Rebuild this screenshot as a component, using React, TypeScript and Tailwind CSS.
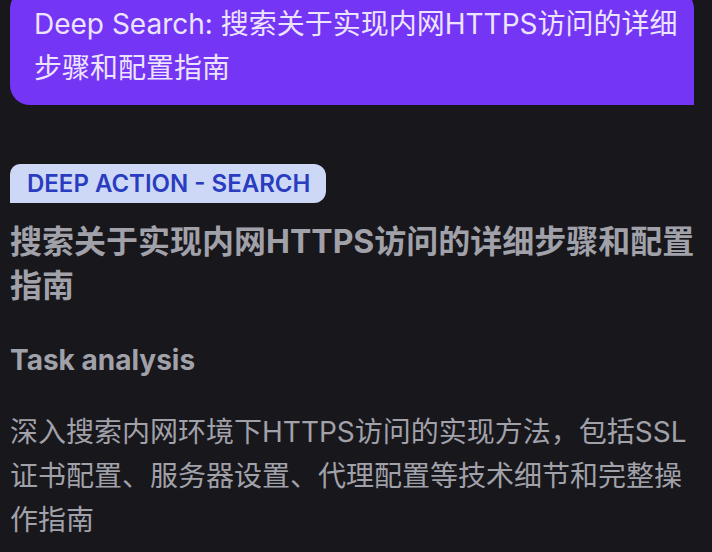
const App = () => {
  return (
    <div
      className="h-[552px] w-full overflow-hidden bg-[#18171c]"
      style={{ fontFamily: 'Inter, "Noto Sans CJK SC", "Noto Sans", sans-serif' }}
    >
      {/* user message bubble */}
      <div className="ml-[10px] mr-[18px] mt-[-11px] rounded-tl-[20px] rounded-tr-[20px] rounded-bl-[20px] bg-[#7435f5] pl-[24px] pr-[12px] pt-[13px] pb-[15px]">
        <p className="text-[28px] leading-[44px] text-[#ece4ff]">
          Deep Search: 搜索关于实现内网HTTPS访问的详细步骤和配置指南
        </p>
      </div>

      {/* response */}
      <div className="mt-[59px] pl-[10px] pr-[14px]">
        <span className="inline-flex h-[39px] items-center rounded-tl-[10px] rounded-r-[12px] bg-[#cdd8f6] pl-[17px] pr-[16px] text-[24px] font-semibold text-[#2a3cc0]">
          DEEP ACTION - SEARCH
        </span>

        <h2 className="mt-[17px] text-[32px] font-bold leading-[44px] text-[#a1a1aa]">
          搜索关于实现内网HTTPS访问的详细步骤和配置指南
        </h2>

        <h3 className="mt-[34px] text-[28px] font-bold leading-[36px] text-[#a1a1aa]">
          Task analysis
        </h3>

        <p className="mt-[32px] text-[28px] leading-[44px] text-[#a1a1aa]">
          深入搜索内网环境下HTTPS访问的实现方法，包括SSL证书配置、服务器设置、代理配置等技术细节和完整操作指南
        </p>
      </div>
    </div>
  );
};

export default App;
